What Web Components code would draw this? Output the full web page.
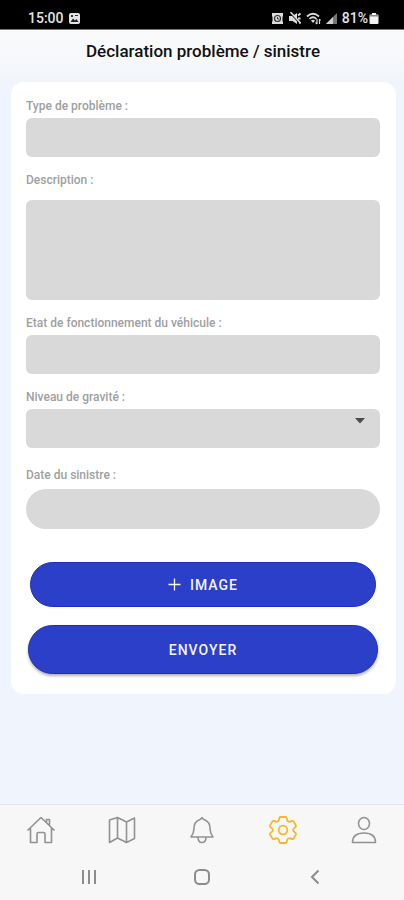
<!DOCTYPE html>
<html lang="fr">
<head>
<meta charset="utf-8">
<meta name="viewport" content="width=device-width, initial-scale=1">
<title>Déclaration problème / sinistre</title>
<style>
  body { margin: 0; font-family: Roboto, "Liberation Sans", sans-serif; background: #f0f4fc; }
</style>
</head>
<body>
<claim-app></claim-app>
<script>
const define = (name, html, setup) => {
  const template = document.createElement('template');
  template.innerHTML = html;
  customElements.define(name, class extends HTMLElement {
    constructor() {
      super();
      this.attachShadow({ mode: 'open' }).append(template.content.cloneNode(true));
    }
    connectedCallback() { if (setup) setup(this, this.shadowRoot); }
  });
};

define('status-bar', `
<style>
  :host { display: flex; align-items: flex-end; justify-content: space-between; box-sizing: border-box;
    height: 30px; padding: 0 25px 3px 28px; background: #000; border-bottom: 1px solid #777;
    color: #e4e4e4; font-size: 14px; line-height: 16px; font-weight: 500; }
  div { display: flex; align-items: center; gap: 4px; }
  svg { display: block; }
  .level { display: flex; align-items: center; gap: 1px; }
</style>
<div><span>15:00</span>
  <svg width="13" height="13" viewBox="0 0 13 13"><rect x="1" y="1" width="11" height="11" rx="2" fill="#e4e4e4"/><path d="M2.500 10 5 6.500l2 2 1.500-1.500 2 3z" fill="#222"/><path d="M3 3h2v2H3zM7 3h3v1H7z" fill="#333"/></svg>
</div>
<div>
  <svg width="13" height="13" viewBox="0 0 13 13"><path d="M1 1h11v3l-.5 1v4l.5 1v2H1v-2l.5-1V5L1 4z" fill="#dcdcdc"/><circle cx="6.500" cy="6.500" r="3" fill="none" stroke="#333" stroke-width="1.200"/><path d="M6.500 5v2H8" fill="none" stroke="#333"/></svg>
  <svg width="14" height="13" viewBox="0 0 14 13"><path d="M1 4h3.500L9 1v11L4.500 9H1z" fill="#dcdcdc"/><path d="M10 3.500 12.500 1.500M10 6.500h2.500M10 9l2.500 2.500" stroke="#dcdcdc" stroke-width="1.800"/><path d="m1.500 0 10 11" stroke="#000" stroke-width="1.500"/><path d="m2.500 0 10 11" stroke="#dcdcdc" stroke-width="1.500"/></svg>
  <svg width="15" height="13" viewBox="0 0 15 13"><path d="M1 4.500Q7 -1 13 4.500M3.500 7Q7 3.500 10.500 7" fill="none" stroke="#dcdcdc" stroke-width="1.700"/><path d="M5 8.500Q7 7 9 8.500L7 11z" fill="#dcdcdc"/><path d="M11 7v5M9.500 10.500 11 12M13.500 7v5M13.500 7l1 1.500" fill="none" stroke="#dcdcdc" stroke-width="1.200"/></svg>
  <svg width="13" height="13" viewBox="0 0 13 13"><path d="M1 12 12 1v11z" fill="#777"/><path d="M1 12 8 5v7z" fill="#cfcfcf"/></svg>
  <span class="level"><span>81%</span>
  <svg width="10" height="13" viewBox="0 0 10 13"><path d="M3 1h4v1.500h1.500q1 0 1 1V11q0 1-1 1h-7q-1 0-1-1V3.500q0-1 1-1H3z" fill="#f2f2f2"/><path d="M1 3h8v1.500H1z" fill="#888"/></svg></span>
</div>`);

define('page-header', `
<style>
  :host { display: block; padding: 10px 8px 20px 10px; text-align: center; background: linear-gradient(#fafafa, #f6f8fb 60%, #f1f5fa); }
  h1 { margin: 0; font-size: 17px; line-height: 22px; font-weight: 500; color: #111; }
</style>
<h1><slot></slot></h1>`);

define('form-card', `
<style>
  :host { display: flex; flex-direction: column; margin: 0 8px 0 11px; padding: 16px 16px 20px 15px;
    background: #fff; border-radius: 13px; }
</style>
<slot></slot>`);

define('form-field', `
<style>
  :host { display: grid; gap: var(--label-gap, 4px); margin-bottom: var(--after, 15px); }
  label { font-size: 12px; line-height: 16px; font-weight: 500; color: #a0a0a0; }
  .box { display: grid; }
  .box > * { grid-area: 1 / 1; }
  input, textarea, select { box-sizing: border-box; width: 100%; height: var(--field-height, 39px); margin: 0;
    padding: 8px 12px; border: 0; border-radius: var(--field-radius, 6px); background: #d9d9d9;
    font: 14px/20px Roboto, "Liberation Sans", sans-serif; color: #333; appearance: none; resize: none; }
  svg { justify-self: end; margin: 9px 15px 0 0; pointer-events: none; }
</style>
<label for="control"></label>
<div class="box"></div>`, (host, root) => {
  root.querySelector('label').textContent = host.getAttribute('label');
  const kind = host.getAttribute('kind') || 'input';
  const control = document.createElement(kind);
  control.id = 'control';
  const box = root.querySelector('.box');
  box.replaceChildren(control);
  if (kind === 'select') {
    box.insertAdjacentHTML('beforeend', '<svg width="10" height="6" viewBox="0 0 10 6" aria-hidden="true"><path d="M0 0h10L5 5.500z" fill="#4c4c4c"/></svg>');
  }
});

define('pill-button', `
<style>
  :host { display: block; }
  button { display: flex; align-items: center; justify-content: center; gap: 9px; box-sizing: border-box; width: 100%;
    height: var(--pill-height, 45px); margin: 0; padding: 0 16px; border: 1px solid #1c2cc0; border-radius: 25px;
    background: #2c3fc9; color: #f4f5ff; box-shadow: var(--pill-shadow, none);
    font: 500 14px/16px Roboto, "Liberation Sans", sans-serif; letter-spacing: 1px; }
</style>
<button type="button"><slot name="icon"></slot><slot></slot></button>`);

define('tab-bar', `
<style>
  :host { display: block; border-top: 1px solid #e4e6ea; background: #f7f7f7; }
  nav { display: grid; grid-template-columns: repeat(5, 1fr); padding-left: 1px; }
  a { display: grid; place-items: center; height: 50px; color: #929292; }
  a[aria-current] { color: #f8b62c; }
  svg { display: block; fill: none; stroke: currentColor; stroke-width: 1.600; stroke-linejoin: round; }
  a[aria-current] svg { stroke-width: 1.800; }
</style>
<nav aria-label="Navigation">
  <a href="#accueil" aria-label="Accueil"><svg width="30" height="30" viewBox="0 0 30 30"><path d="M1.500 15.500 15 2.500l13.500 13M4.500 13.500V27.500h6.500V19q0-1.500 1.500-1.500h5q1.500 0 1.500 1.500v8.500H25.500V13M20.500 7.500V4.500h3V10.500"/></svg></a>
  <a href="#carte" aria-label="Carte"><svg width="30" height="30" viewBox="0 0 30 30"><path d="M2.500 5 10.500 2.500l9 4.500 8-4v20.500l-8 4-9-4.500-8 4.500zM10.500 2.500V23M19.500 7v20.500"/></svg></a>
  <a href="#alertes" aria-label="Alertes"><svg width="30" height="30" viewBox="0 0 30 30"><path d="M15 2.500q1 2 3 2.500 5 2 5 8.500 0 4.500 3 8.500H4q3-4 3-8.500Q7 7 12 5q2-.5 3-2.500zM11 22q0 5.500 4 5.500t4-5.500"/></svg></a>
  <a href="#reglages" aria-label="Réglages" aria-current="page"><svg width="30" height="30" viewBox="0 0 30 30"><path d="M12.500 2h5q1 0 1.200 1l.5 2.200q.3 1 1.200 1.300.8.400 1.700.1l2-.7q1-.3 1.500.5l2.200 3.800q.5.9-.2 1.600l-1.600 1.500q-.9.800-.9 1.700t.9 1.700l1.600 1.500q.7.700.2 1.600l-2.200 3.800q-.5.800-1.500.5l-2-.7q-.9-.3-1.700.1-.9.300-1.200 1.300l-.5 2.200q-.2 1-1.200 1h-5q-1 0-1.200-1l-.5-2.200q-.3-1-1.200-1.300-.8-.4-1.700-.1l-2 .7q-1 .3-1.500-.5L2.200 19.800q-.5-.9.200-1.600L4 16.700q.9-.8.900-1.700T4 13.300l-1.600-1.500q-.7-.7-.2-1.600l2.200-3.800q.5-.8 1.500-.5l2 .7q.9.300 1.700-.1.900-.3 1.200-1.300L11.300 3q.2-1 1.200-1z"/><circle cx="15" cy="15" r="4.300"/></svg></a>
  <a href="#profil" aria-label="Profil"><svg width="30" height="30" viewBox="0 0 30 30"><ellipse cx="15" cy="8.500" rx="5.500" ry="6"/><path d="M3.500 27.500q0-9.500 11.500-9.500t11.500 9.500z"/></svg></a>
</nav>`);

define('system-bar', `
<style>
  :host { display: grid; grid-template-columns: repeat(3, 1fr); padding: 0 32px 2px; background: #f7f7f7; }
  button { display: grid; place-items: center; height: 43px; margin: 0; padding: 0; border: 0; background: none; color: #8c8c8c; }
  svg { display: block; fill: none; stroke: currentColor; stroke-width: 2; }
</style>
<button type="button" aria-label="Applications récentes"><svg width="18" height="18" viewBox="0 0 18 18"><path d="M3 2v14M9 2v14M15 2v14"/></svg></button>
<button type="button" aria-label="Écran d'accueil"><svg width="18" height="18" viewBox="0 0 18 18"><rect x="2" y="2" width="14" height="14" rx="4.500"/></svg></button>
<button type="button" aria-label="Retour"><svg width="18" height="18" viewBox="0 0 18 18"><path d="M12.500 2.500 6 9l6.500 6.500"/></svg></button>`);

define('claim-app', `
<style>
  :host { display: flex; flex-direction: column; min-height: 100vh; }
  main { flex: 1; padding-bottom: 16px; }
  .description { --label-gap: 12px; --field-height: 100px; }
  .severity { --after: 19px; }
  .date { --label-gap: 6px; --field-height: 40px; --field-radius: 20px; --after: 33px; }
  .image { margin: 0 4px 18px; }
  .send { margin: 0 2px; --pill-height: 49px; --pill-shadow: 0 2px 3px rgba(0, 0, 0, .3); }
  svg { display: block; }
</style>
<status-bar></status-bar>
<page-header>Déclaration problème / sinistre</page-header>
<main>
  <form-card>
    <form-field label="Type de problème :"></form-field>
    <form-field class="description" kind="textarea" label="Description :"></form-field>
    <form-field label="Etat de fonctionnement du véhicule :"></form-field>
    <form-field class="severity" kind="select" label="Niveau de gravité :"></form-field>
    <form-field class="date" label="Date du sinistre :"></form-field>
    <pill-button class="image"><svg slot="icon" width="13" height="13" viewBox="0 0 13 13" aria-hidden="true"><path d="M6.500 .5v12M.5 6.500h12" stroke="#f4f5ff" stroke-width="1.300"/></svg>IMAGE</pill-button>
    <pill-button class="send">ENVOYER</pill-button>
  </form-card>
</main>
<tab-bar></tab-bar>
<system-bar></system-bar>`);
</script>
</body>
</html>
